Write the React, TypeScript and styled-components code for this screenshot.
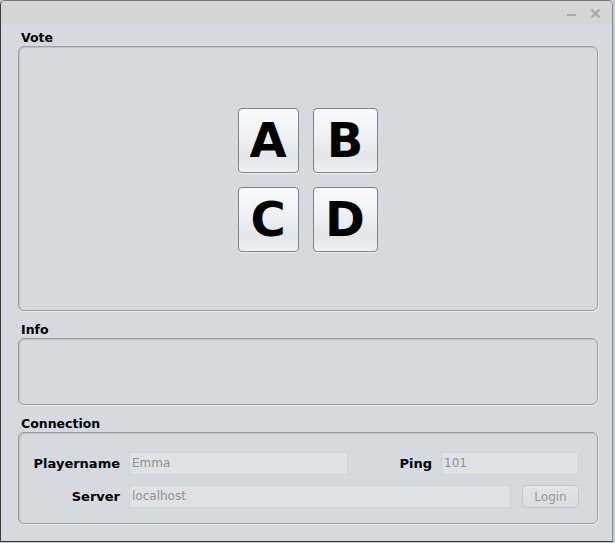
import React from 'react';
import styled, { createGlobalStyle } from 'styled-components';

const GlobalStyle = createGlobalStyle`
  html, body {
    margin: 0;
    padding: 0;
    background: #c9cacc;
  }
  body {
    font-family: 'DejaVu Sans', 'Liberation Sans', sans-serif;
  }
`;

const Window = styled.div`
  width: 613px;
  height: 542px;
  box-sizing: border-box;
  border: 1px solid #3a3a3a;
  border-top-color: #777;
  border-right-color: #8a8a8a;
  border-radius: 5px 5px 0 0;
  background: #d6d9df;
  display: flex;
  flex-direction: column;
  overflow: hidden;
`;

const TitleBar = styled.div`
  height: 24px;
  background: #d5d5d5;
  display: flex;
  align-items: center;
  justify-content: flex-end;
  gap: 11px;
  padding-right: 10px;
`;

const TitleIcon = styled.svg`
  width: 13px;
  height: 13px;
  display: block;
`;

const Content = styled.div`
  flex: 1;
  display: flex;
  flex-direction: column;
  padding: 6px 14px 0 17px;
`;

const Section = styled.section<{ $first?: boolean }>`
  display: flex;
  flex-direction: column;
  margin-top: ${({ $first }) => ($first ? '0' : '12px')};
`;

const SectionTitle = styled.div`
  height: 14px;
  line-height: 14px;
  margin-bottom: 1px;
  padding-left: 3px;
  font-size: 12.5px;
  font-weight: bold;
  color: #000;
`;

const Panel = styled.div<{ $height: number }>`
  height: ${({ $height }) => $height}px;
  box-sizing: border-box;
  border: 1px solid #9a9ea5;
  border-radius: 6px;
  box-shadow: inset 1px 1px 1px rgba(0, 0, 0, 0.12), 1px 1px 0 #e8eaee;
  background: #d6d9df;
`;

const VotePanel = styled(Panel)`
  display: flex;
  align-items: center;
  justify-content: center;
`;

const VoteGrid = styled.div`
  display: grid;
  grid-template-columns: 61px 65px;
  grid-auto-rows: 65px;
  column-gap: 14px;
  row-gap: 14px;
  margin-left: -1px;
  margin-top: 2px;
`;

const VoteButton = styled.button`
  width: 100%;
  height: 65px;
  box-sizing: border-box;
  border: 1px solid #7f8287;
  border-radius: 4px;
  background: linear-gradient(#fbfbfc 0%, #eef0f3 45%, #e3e5e9 75%, #eff1f5 100%);
  box-shadow: 0 1px 0 rgba(255, 255, 255, 0.6);
  font-family: 'DejaVu Sans', sans-serif;
  font-weight: bold;
  font-size: 48px;
  color: #000;
  padding: 0;
  display: flex;
  align-items: center;
  justify-content: center;
`;

const ConnectionPanel = styled(Panel)`
  display: flex;
  flex-direction: column;
  gap: 10px;
  padding: 19px 18px 0 14px;
`;

const Row = styled.div`
  display: flex;
  align-items: center;
  height: 23px;
`;

const FieldLabel = styled.label<{ $width?: number }>`
  width: ${({ $width }) => ($width ? `${$width}px` : 'auto')};
  text-align: right;
  font-size: 13px;
  font-weight: bold;
  color: #000;
  margin-right: 9px;
  flex-shrink: 0;
`;

const Field = styled.div<{ $width?: number }>`
  ${({ $width }) => ($width ? `width: ${$width}px;` : 'flex: 1;')}
  height: 23px;
  box-sizing: border-box;
  background: #dfe1e5;
  border: 1px solid #d0d3d8;
  font-size: 12px;
  color: #8f9094;
  line-height: 21px;
  padding-left: 2px;
  flex-shrink: 0;
`;

const Spacer = styled.div`
  flex: 1;
`;

const LoginButton = styled.button`
  width: 57px;
  height: 23px;
  margin-left: 11px;
  box-sizing: border-box;
  border: 1px solid #c6c9ce;
  border-radius: 4px;
  background: linear-gradient(#e2e4e8, #d9dce1);
  font-family: 'DejaVu Sans', sans-serif;
  font-size: 12px;
  color: #96989c;
  padding: 0;
`;

export default function App() {
  return (
    <>
      <GlobalStyle />
      <Window>
        <TitleBar>
          <TitleIcon viewBox="0 0 13 13">
            <rect x="2" y="7" width="9" height="2" fill="#a9a9a9" />
          </TitleIcon>
          <TitleIcon viewBox="0 0 13 13">
            <path d="M2.5 2.5 L10.5 10.5 M10.5 2.5 L2.5 10.5" stroke="#a9a9a9" strokeWidth="2.2" />
          </TitleIcon>
        </TitleBar>
        <Content>
          <Section $first>
            <SectionTitle>Vote</SectionTitle>
            <VotePanel $height={265}>
              <VoteGrid>
                <VoteButton>A</VoteButton>
                <VoteButton>B</VoteButton>
                <VoteButton>C</VoteButton>
                <VoteButton>D</VoteButton>
              </VoteGrid>
            </VotePanel>
          </Section>
          <Section>
            <SectionTitle>Info</SectionTitle>
            <Panel $height={67} />
          </Section>
          <Section>
            <SectionTitle>Connection</SectionTitle>
            <ConnectionPanel $height={92}>
              <Row>
                <FieldLabel $width={87}>Playername</FieldLabel>
                <Field $width={219}>Emma</Field>
                <Spacer />
                <FieldLabel>Ping</FieldLabel>
                <Field $width={138}>101</Field>
              </Row>
              <Row>
                <FieldLabel $width={87}>Server</FieldLabel>
                <Field>localhost</Field>
                <LoginButton disabled>Login</LoginButton>
              </Row>
            </ConnectionPanel>
          </Section>
        </Content>
      </Window>
    </>
  );
}
